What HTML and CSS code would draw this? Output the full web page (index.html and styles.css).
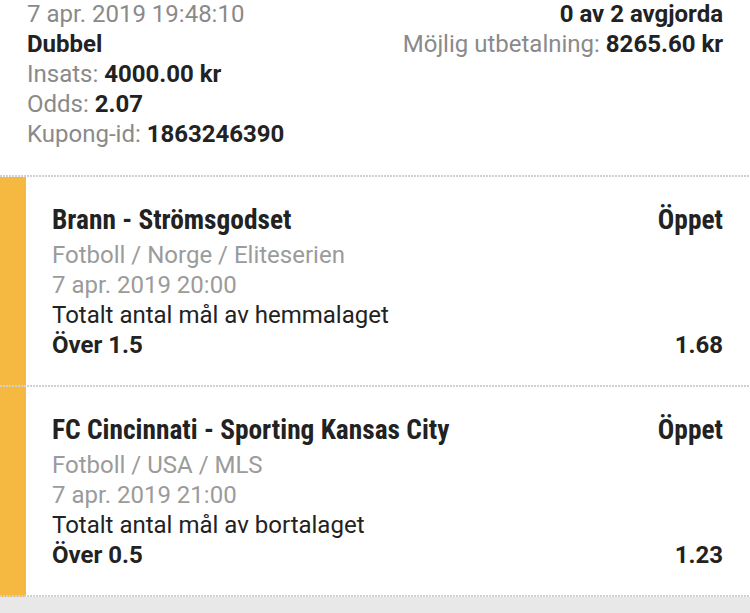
FILE: index.html
```html
<!DOCTYPE html>
<html lang="sv">

<head>
    <meta charset="UTF-8">
    <meta name="viewport" content="width=device-width, initial-scale=1.0">
    <title>Kupong</title>
    <link rel="stylesheet" href="styles.css">
</head>

<body>
    <div class="coupon">
        <div class="coupon-head">
            <div class="head-left">
                <div class="muted">7 apr. 2019 19:48:10</div>
                <div class="strong">Dubbel</div>
                <div><span class="muted">Insats:</span> <b>4000.00 kr</b></div>
                <div><span class="muted">Odds:</span> <b>2.07</b></div>
                <div><span class="muted">Kupong-id:</span> <b>1863246390</b></div>
            </div>
            <div class="head-right">
                <div class="strong">0 av 2 avgjorda</div>
                <div><span class="muted">Möjlig utbetalning:</span> <b>8265.60 kr</b></div>
            </div>
        </div>

        <div class="selection">
            <div class="selection-top">
                <span class="event">Brann - Strömsgodset</span>
                <span class="status">Öppet</span>
            </div>
            <div class="light">Fotboll / Norge / Eliteserien</div>
            <div class="light">7 apr. 2019 20:00</div>
            <div>Totalt antal mål av hemmalaget</div>
            <div class="selection-bottom">
                <b>Över 1.5</b>
                <b>1.68</b>
            </div>
        </div>

        <div class="selection">
            <div class="selection-top">
                <span class="event">FC Cincinnati - Sporting Kansas City</span>
                <span class="status">Öppet</span>
            </div>
            <div class="light">Fotboll / USA / MLS</div>
            <div class="light">7 apr. 2019 21:00</div>
            <div>Totalt antal mål av bortalaget</div>
            <div class="selection-bottom">
                <b>Över 0.5</b>
                <b>1.23</b>
            </div>
        </div>
    </div>
    <div class="footer-space"></div>
</body>

</html>
```

FILE: styles.css
```css
body {
    margin: 0;
    font-family: Roboto, "Noto Sans", sans-serif;
    font-size: 24px;
    line-height: 30px;
    color: #222;
    background-color: #fff;
}

b,
.strong {
    font-weight: bold;
}

.muted {
    color: #8a8a8a;
}

.light {
    color: #9b9b9b;
}

.coupon-head {
    display: flex;
    justify-content: space-between;
    margin-top: -1px;
    padding: 0 27px 28px 27px;
    background-image: repeating-linear-gradient(to right, #d0d0d0 0 2px, transparent 2px 3px);
    background-size: 100% 2px;
    background-position: left bottom;
    background-repeat: no-repeat;
}

.head-right {
    text-align: right;
}

.selection {
    padding: 26px 27px 27px 52px;
    background-image:
        repeating-linear-gradient(to right, #d0d0d0 0 2px, transparent 2px 3px),
        linear-gradient(to right, #f5b942 26px, #fff 26px);
    background-size: 100% 2px, 100% 100%;
    background-position: left bottom, left top;
    background-repeat: no-repeat;
}

.selection-top,
.selection-bottom {
    display: flex;
    justify-content: space-between;
}

.selection-top {
    line-height: 34px;
    margin-bottom: 3px;
}

.event,
.status {
    font-family: "Roboto Condensed", "Liberation Sans Narrow", "DejaVu Sans Condensed", Roboto, sans-serif;
    font-stretch: condensed;
    font-weight: bold;
    font-size: 27.4px;
}

.footer-space {
    height: 60px;
    background-color: #e8e8e8;
}
```
